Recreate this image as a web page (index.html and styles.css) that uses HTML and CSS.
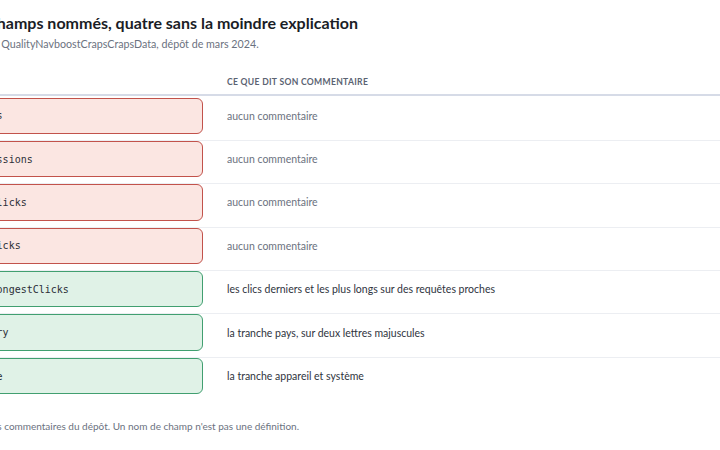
FILE: index.html
```html
<!DOCTYPE html>
<html lang="fr">
<head>
<meta charset="utf-8">
<title>Champs</title>
<link rel="stylesheet" href="styles.css">
</head>
<body>
<main class="page">
  <h1 class="title">Sept champs nommés, quatre sans la moindre explication</h1>
  <p class="sub">Message : QualityNavboostCrapsCrapsData, dépôt de mars 2024.</p>
  <div class="table">
    <div class="thead">
      <span class="th">Champ</span>
      <span class="th">Ce que dit son commentaire</span>
    </div>
    <div class="row">
      <span class="field bad">clicks</span>
      <span class="note muted">aucun commentaire</span>
    </div>
    <div class="row">
      <span class="field bad">impressions</span>
      <span class="note muted">aucun commentaire</span>
    </div>
    <div class="row">
      <span class="field bad">goodClicks</span>
      <span class="note muted">aucun commentaire</span>
    </div>
    <div class="row">
      <span class="field bad">badClicks</span>
      <span class="note muted">aucun commentaire</span>
    </div>
    <div class="row">
      <span class="field good">lastLongestClicks</span>
      <span class="note">les clics derniers et les plus longs sur des requêtes proches</span>
    </div>
    <div class="row">
      <span class="field good">country</span>
      <span class="note">la tranche pays, sur deux lettres majuscules</span>
    </div>
    <div class="row">
      <span class="field good">device</span>
      <span class="note">la tranche appareil et système</span>
    </div>
  </div>
  <p class="foot">Source : les commentaires du dépôt. Un nom de champ n'est pas une définition.</p>
</main>
</body>
</html>
```
FILE: styles.css
```css
html, body {
  margin: 0;
  padding: 0;
  background: #ffffff;
}
body {
  overflow: hidden;
  font-family: Lato, "Open Sans", sans-serif;
  color: #1f2330;
}
.page {
  margin-left: -48px;
}
.title {
  margin: 11px 0 0 1px;
  font-size: 16px;
  line-height: 24px;
  font-weight: 700;
  color: #1a1d26;
}
.sub {
  margin: 1px 0 0;
  font-size: 10.7px;
  line-height: 16px;
  color: #6b7280;
}
.table {
  margin-top: 24px;
}
.thead {
  display: grid;
  grid-template-columns: 251px 1fr;
  column-gap: 24px;
  padding-bottom: 6px;
  border-bottom: 2px solid #d6dbe7;
}
.th {
  font-size: 8.6px;
  line-height: 12px;
  font-weight: 700;
  text-transform: uppercase;
  letter-spacing: 0.3px;
  color: #5b6372;
}
.row {
  display: grid;
  grid-template-columns: 251px 1fr;
  column-gap: 24px;
  align-items: center;
  padding: 0 0 6px;
  border-top: 1px solid #eceef2;
}
.thead + .row {
  border-top: none;
  padding-top: 1.5px;
}
.field {
  box-sizing: border-box;
  height: 36.4px;
  display: flex;
  align-items: center;
  padding: 0 9.5px 0 13.5px;
  border: 1.5px solid;
  border-radius: 6px;
  font-family: "DejaVu Sans Mono", monospace;
  font-size: 10px;
  color: #2b2f38;
}
.bad {
  background: #fbe6e2;
  border-color: #c2524b;
}
.good {
  background: #e0f2e7;
  border-color: #419f70;
}
.note {
  font-size: 10.5px;
  line-height: 14px;
  color: #2f3440;
}
.note.muted {
  color: #6b7280;
}
.foot {
  margin: 18px 0 0;
  font-size: 10px;
  line-height: 16px;
  color: #6b7280;
}
```
